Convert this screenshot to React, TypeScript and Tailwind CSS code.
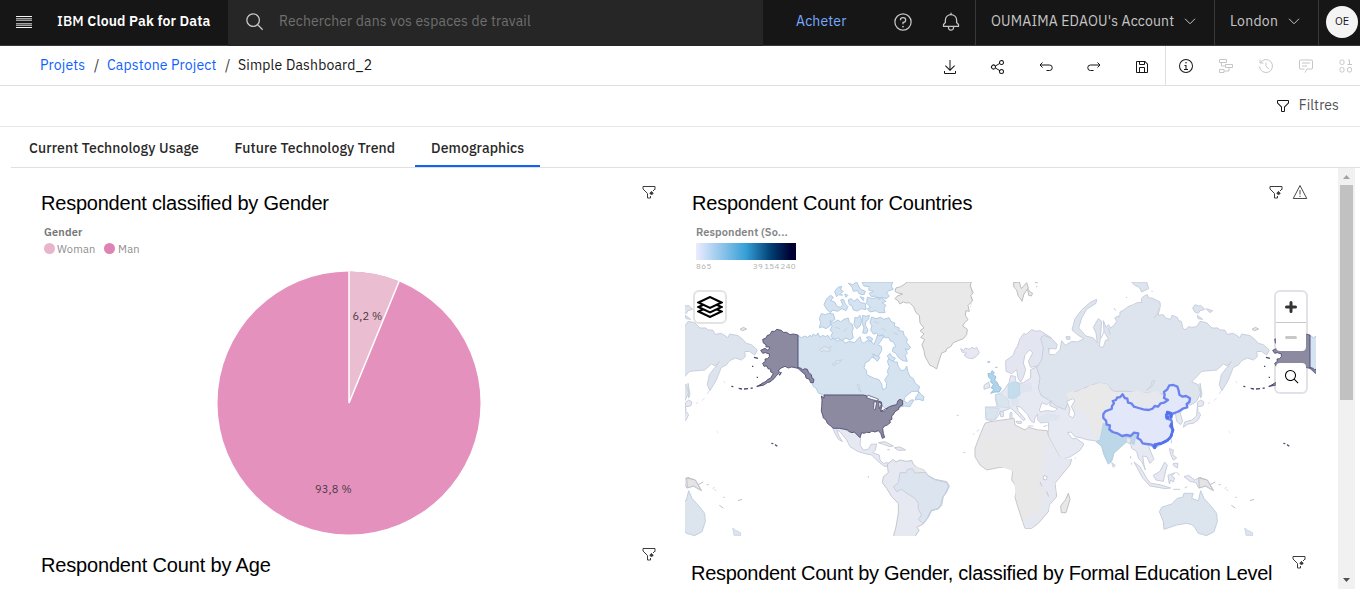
import React from 'react';

type IconProps = { className?: string };

const glyphs = {
  search:
    'M29 27.586l-7.552-7.552a11.018 11.018 0 1 0-1.414 1.414L27.586 29zM4 13a9 9 0 1 1 9 9 9.01 9.01 0 0 1-9-9z',
  bell:
    'M28.707 19.293L26 16.586V13a10.014 10.014 0 0 0-9-9.95V1h-2v2.05A10.014 10.014 0 0 0 6 13v3.586l-2.707 2.707A1 1 0 0 0 3 20v3a1 1 0 0 0 1 1h7v.777a5.152 5.152 0 0 0 4.5 5.199A5.006 5.006 0 0 0 21 25v-1h7a1 1 0 0 0 1-1v-3a1 1 0 0 0-.293-.707zM19 25a3 3 0 0 1-6 0v-1h6zm8-3H5v-1.586l2.707-2.707A1 1 0 0 0 8 17v-4a8 8 0 0 1 16 0v4a1 1 0 0 0 .293.707L27 20.414z',
  download:
    'M26 24v4H6v-4H4v4a2 2 0 0 0 2 2h20a2 2 0 0 0 2-2v-4zM26 14l-1.41-1.41L17 20.17V2h-2v18.17l-7.59-7.58L6 14l10 10 10-10z',
  share:
    'M23 20a5 5 0 0 0-3.89 1.89l-7.31-4.57a4.46 4.46 0 0 0 0-2.64l7.31-4.57A5 5 0 1 0 18 7a4.79 4.79 0 0 0 .2 1.32l-7.31 4.57a5 5 0 1 0 0 6.22l7.31 4.57A4.79 4.79 0 0 0 18 25a5 5 0 1 0 5-5zm0-16a3 3 0 1 1-3 3 3 3 0 0 1 3-3zM7 19a3 3 0 1 1 3-3 3 3 0 0 1-3 3zm16 9a3 3 0 1 1 3-3 3 3 0 0 1-3 3z',
  save:
    'M27.71 9.29l-5-5A1 1 0 0 0 22 4H6a2 2 0 0 0-2 2v20a2 2 0 0 0 2 2h20a2 2 0 0 0 2-2V10a1 1 0 0 0-.29-.71zM12 6h8v4h-8zm8 20h-8v-8h8zm2 0v-8a2 2 0 0 0-2-2h-8a2 2 0 0 0-2 2v8H6V6h4v4a2 2 0 0 0 2 2h8a2 2 0 0 0 2-2V6.41l4 4V26z',
  info:
    'M17 22v-8h-4v2h2v6h-3v2h8v-2h-3zM16 8a1.5 1.5 0 1 0 1.5 1.5A1.5 1.5 0 0 0 16 8zM16 30A14 14 0 1 1 30 16 14 14 0 0 1 16 30zM16 4A12 12 0 1 0 28 16 12 12 0 0 0 16 4z',
  filter:
    'M18 28h-4a2 2 0 0 1-2-2v-7.59L4.59 11A2 2 0 0 1 4 9.59V6a2 2 0 0 1 2-2h20a2 2 0 0 1 2 2v3.59a2 2 0 0 1-.59 1.41L20 18.41V26a2 2 0 0 1-2 2zM6 6v3.59l8 8V26h4v-8.41l8-8V6z',
};

function Glyph({ name, className }: { name: keyof typeof glyphs; className?: string }) {
  return (
    <svg viewBox="0 0 32 32" fill="currentColor" className={className}>
      <path d={glyphs[name]} />
    </svg>
  );
}

function Line({ className, children }: IconProps & { children: React.ReactNode }) {
  return (
    <svg viewBox="0 0 32 32" fill="none" stroke="currentColor" strokeWidth={2} className={className}>
      {children}
    </svg>
  );
}

const Chevron = () => (
  <Line className="size-4 text-[#c6c6c6]">
    <path d="M6 11.500l10 10 10-10" />
  </Line>
);

function WidgetFilter() {
  return (
    <Line className="size-4 text-[#3d3d3d]">
      <path d="M28 11V5H4v5l9 9v9h6v-4" />
      <path d="M28 10l-4 4" />
      <circle cx="21" cy="18.500" r="2.500" fill="currentColor" />
      <path d="M21 14v2M17 18.500h8" strokeWidth={1.500} />
    </Line>
  );
}

function Header() {
  return (
    <header className="flex h-[46px] bg-[#161616] text-[14px] leading-[18px] text-[#c6c6c6]">
      <div className="flex w-[228px] items-center border-b border-[#393939] pb-[3px] pl-4">
        <svg viewBox="0 0 16 12" className="mt-0.5 h-3 w-4" shapeRendering="crispEdges">
          <path d="M0 .5h16M0 11.500h16" stroke="#f4f4f4" />
          <path d="M0 2.500h16M0 4.500h16M0 7.500h16M0 9.500h16" stroke="#a0a0a0" />
          <path d="M0 3.500h16M0 8.500h16" stroke="#5c5c5c" />
        </svg>
        <span className="ml-[25px] whitespace-nowrap text-[14px] tracking-[0.14px] text-white">
          <span className="font-medium">IBM </span>
          <b className="font-semibold">Cloud Pak for Data</b>
        </span>
      </div>
      <div className="flex w-[535px] items-center bg-[#262626] pb-1 pl-[17px]">
        <Glyph name="search" className="mt-px size-5 text-[#c6c6c6]" />
        <span className="ml-[14px] tracking-[0.14px] text-[#6f6f6f]">Rechercher dans vos espaces de travail</span>
      </div>
      <div className="flex flex-1 border-b border-[#393939]">
        <div className="flex w-[213px] items-center border-r border-[#393939] pb-[3px] pl-[33px]">
          <span className="w-[51px] tracking-[0.16px] text-[#78a9ff]">Acheter</span>
          <Line className="ml-[46px] mt-px size-5">
            <circle cx="16" cy="16" r="13" />
            <path d="M12 13v-.5a3.500 3.500 0 0 1 3.500-3.500h1a3.500 3.500 0 0 1 0 7.500H16V19.500" />
            <circle cx="16" cy="23.500" r=".8" fill="currentColor" strokeWidth={1.400} />
          </Line>
          <Glyph name="bell" className="ml-7 mt-px size-5" />
        </div>
        <div className="flex w-[239px] items-center justify-between border-r border-[#393939] pb-[3px] pl-[15px] pr-4">
          <span className="whitespace-nowrap tracking-[0.16px]">OUMAIMA EDAOU's Account</span>
          <Chevron />
        </div>
        <div className="flex w-[104px] items-center justify-between border-r border-[#393939] pb-[3px] pl-[15px] pr-4">
          <span className="tracking-[0.25px]">London</span>
          <Chevron />
        </div>
        <div className="flex flex-1 items-center pb-0.5 pl-[7px]">
          <div className="flex size-8 shrink-0 items-center justify-center rounded-full bg-[#f4f4f4] pb-0.5 text-[11px] text-[#161616]">
            OE
          </div>
        </div>
      </div>
    </header>
  );
}

function Toolbar() {
  return (
    <div className="flex h-10 justify-between border-b border-[#e0e0e0] text-[14px]">
      <nav className="flex items-center pl-10 tracking-[0.16px] text-[#0f62fe]">
        <span className="w-[45px]">Projets</span>
        <span className="w-[22px] pl-[9px] text-[#393939]">/</span>
        <span className="w-[109px] whitespace-nowrap">Capstone Project</span>
        <span className="w-[22px] pl-[9px] text-[#393939]">/</span>
        <span className="text-[#161616]">Simple Dashboard_2</span>
      </nav>
      <div className="flex">
        <div className="flex items-center gap-8 border-r border-[#e0e0e0] pr-[15px] pt-0.5 text-[#161616]">
          <Glyph name="download" className="size-4" />
          <Glyph name="share" className="size-4" />
          <Line className="size-4">
            <path d="M9 7l-5 5 5 5M4 12h19a5.500 5.500 0 0 1 0 11h-6" />
          </Line>
          <Line className="size-4">
            <path d="M23 7l5 5-5 5M28 12H9a5.500 5.500 0 0 0 0 11h6" />
          </Line>
          <Glyph name="save" className="size-4" />
        </div>
        <div className="flex items-center gap-6 pl-3 pr-1.5 text-[#c6c6c6]">
          <Glyph name="info" className="size-4 text-[#161616]" />
          <Line className="size-4">
            <path d="M3 3h14v6H3zM15 13h14v6H15zM3 23h9v6H3zM7 9v7h8M22 19v7H12" />
          </Line>
          <Line className="size-4">
            <path d="M4 3v7h7M4.500 10A13 13 0 1 1 3 17M16 9v8l6 5" />
          </Line>
          <Line className="size-4">
            <path d="M14 29l4-7h9a2 2 0 0 0 2-2V6a2 2 0 0 0-2-2H5a2 2 0 0 0-2 2v14a2 2 0 0 0 2 2h8M8 10h16M8 16h10" />
          </Line>
          <Line className="size-4">
            <rect x="4" y="4" width="8" height="9" rx="3" />
            <rect x="4" y="19" width="8" height="9" rx="3" />
            <rect x="19" y="19" width="8" height="9" rx="3" />
            <path d="M20 4h3v9M19 13h9" />
          </Line>
        </div>
      </div>
    </div>
  );
}

const tabs = [
  { label: 'Current Technology Usage', style: 'w-[205px] pl-[18px]' },
  { label: 'Future Technology Trend', style: 'w-[199px] pl-[18.500px]' },
  { label: 'Demographics', style: 'w-[125px] border-b-[#0f62fe] pl-4' },
];

function Tabs() {
  return (
    <div className="ml-[11px] flex h-[41px] border-b border-[#e0e0e0]">
      {tabs.map((t) => (
        <div
          key={t.label}
          className={`flex items-center whitespace-nowrap border-b-2 border-transparent pt-[5px] text-[14px] font-medium tracking-[0.1px] text-[#282828] ${t.style}`}
        >
          {t.label}
        </div>
      ))}
    </div>
  );
}

function GenderPie() {
  return (
    <svg viewBox="0 0 266 266" className="ml-[176px] size-[266px]" fontFamily='"IBM Plex Sans", Roboto, sans-serif'>
      <circle cx="133" cy="133" r="131.500" fill="#e491be" />
      <path d="M133 133V1.500A131.500 131.500 0 0 1 183.500 11.600Z" fill="#ebbdd1" />
      <path d="M133 1V133L183.200 11" fill="none" stroke="#fff" strokeWidth="1.500" />
      <text x="136.500" y="50" fontSize="11" letterSpacing=".2" fill="#4b3b43">6,2 %</text>
      <text x="99" y="223" fontSize="11" letterSpacing=".2" fill="#4b3b43">93,8 %</text>
    </svg>
  );
}

const edge = '#c9cedd';

function Americas() {
  return (
    <>
      <g transform="translate(810 278) scale(.33333)" fill="#d5e2ef" stroke="#b2cbe4" strokeWidth="3" strokeLinejoin="round">
        <path d="M-36 172L-26 179 -16 174 -8 178 0 172 6 176 10 168 18 174 24 165 30 178 38 172 46 176 54 172 62 184 74 178 80 190 90 184 100 188 106 196 116 190 134 194 142 184 150 176 154 190 162 196 170 188 184 190 192 200 198 184 204 168 212 170 222 176 212 190 204 200 215 206 215 217 205 235 198 244 186 237 176 250 166 254 162 270 170 278 170 290 190 300 207 305 215 318 218 335 228 331 230 316 224 305 235 290 232 280 238 266 232 250 240 236 252 252 262 252 264 264 274 278 284 276 290 264 294 282 300 295 310 302 316 316 329 326 324 340 306 340 296 348 284 358 282 368 292 376 302 366 312 366 304 378 300 386 284 384 250 392 226 392 200 365 180 352 40 351 25 345 18 330 10 325 4 310 -8 298 -15 290 -36 273Z" />
        <path d="M318 356L326 346 324 338 334 350 342 356 340 368 326 364 316 366ZM185 117L198 122 212 118 222 124 237 119 243 130 255 136 252 144 268 150 266 158 280 160 282 172 292 182 290 194 302 208 294 216 286 212 292 226 286 232 292 250 278 248 265 238 258 226 247 220 250 208 258 206 250 192 240 188 236 178 226 180 218 170 206 174 200 166 190 168 182 156 186 144 180 134ZM60 128L70 134 84 126 92 132 102 124 115 120 118 134 126 138 130 150 126 162 130 180 120 186 108 180 95 188 84 180 74 184 62 175 68 164 60 156 66 146ZM34 107L46 110 56 106 70 108 75 124 62 132 60 144 48 152 36 146 28 150 32 134 28 122ZM135 118L142 120 150 112 155 128 150 144 140 152 132 140ZM158 112L168 115 178 112 176 124 168 130 166 142 174 156 170 166 158 165 162 150 156 134Z" />
        <path d="M42 80L50 62 62 52 70 58 62 68 74 72 82 86 92 88 98 80 92 66 100 64 106 78 114 86 108 98 96 92 82 100 68 96 62 104 52 96ZM115 65L124 62 132 70 142 62 152 74 166 76 168 95 154 92 142 99 130 96 126 84 118 80ZM172 58L188 62 200 58 215 60 228 70 216 74 228 82 222 90 225 104 206 104 198 98 180 102 172 92 182 88 170 76ZM156 12H248L244 26 250 34 236 38 230 45 238 54 230 62 215 58 206 64 196 54 184 56 178 46 190 40 176 36 178 26 162 24ZM115 15L128 20 140 12 146 24 152 34 166 40 162 50 148 48 142 38 130 40 126 28ZM74 40L84 28 95 25 92 36 100 40 92 46 98 52 86 50 80 56ZM168 178L178 176 188 182 184 192ZM188 228L198 232 210 238 202 250 192 240ZM232 234L240 226 246 236 256 240 250 250 238 244ZM104 48L114 52 108 58ZM150 56L162 60 160 68Z" />
        <path d="M28 214L38 210 44 204 52 210 64 206 58 214 62 218 48 222 42 216 36 222ZM66 258L76 254 80 246 90 248 96 244 88 254 76 258 72 264ZM142 318L150 324 148 332 154 342 146 336ZM76 148L90 152M100 160L112 150M192 130L206 136M214 150L228 158M250 164L264 170" fill="#dfe6ec" stroke="#bccbda" strokeWidth="2" />
        <path
          d="M255 40L258 30 272 26 285 18 290 12H484L480 24 490 45 482 52 488 68 474 82 478 100 468 98 466 112 474 125 464 134 458 144 472 154 470 170 460 182 444 188 430 194 422 206 410 212 408 220 395 225 390 240 385 255 380 273 370 266 360 262 352 248 345 235 342 218 336 200 344 184 332 178 342 168 330 158 342 150 330 135 328 112 318 104 310 85 298 74 290 75 280 72 270 78 264 68 255 62 262 54 278 48 262 44Z"
          fill="#e9e9e9"
          stroke="#bdbdbd"
        />
        <path d="M482 20l4 26M486 60l-4 26" fill="none" stroke="#c4c4c4" strokeDasharray="4 4" />
        <path d="M452 212L462 218 466 210 478 214 486 208 494 212 500 208 508 224 500 234 488 242 474 240 462 232 470 226 456 222Z" fill="#e7e8f3" stroke={edge} />
      </g>
      <g transform="translate(680 278) scale(.33333)" fill="#8b8aa1" stroke="#49466f" strokeWidth="2.500">
        <path d="M354 171L340 168 330 170 320 163 310 163 304 157 290 154 284 160 275 160 270 170 262 172 258 180 248 184 250 195 258 200 258 207 268 207 268 213 262 216 255 211 242 217 248 226 256 224 268 228 268 236 262 242 255 243 256 250 248 256 252 265 260 264 264 272 272 274 272 282 280 286 272 300 264 304 255 312 246 316 236 324 250 322 262 314 270 312 282 302 290 292 298 285 296 276 304 270 315 265 325 270 335 267 354 271ZM354 269L362 270 368 276 374 272 382 274 386 284 394 290 396 300 402 304 400 314 392 314 388 304 378 300 376 290 370 285Z" />
        <path d="M298 292L304 282M222 238L234 241M216 265h4M230 298h4M154 325l6 1M176 331l10 2M192 333l12-1M212 331l6-1M230 326l14-6" strokeWidth="4" />
        <path d="M180 154L190 148 200 153 188 158Z" fill="#e7e7e7" stroke="#bbb" />
        <path d="M130 310l6 5M110 460l5 4" stroke="#cfdcf0" />
      </g>
      <g transform="translate(800 380) scale(.33333)" fill="#e6e8f2" stroke={edge} strokeWidth="3">
        <path d="M97 142L118 145 135 148 148 155 163 156 172 165 182 174 180 195 190 210 205 208 213 193 230 192 226 210 218 218 238 225 240 240 250 250 265 248 268 256 255 260 235 245 215 225 200 222 175 215 150 200 140 180 120 155 110 150 118 170 128 185 115 178 105 160Z" />
        <path d="M235 188L255 185 280 198 270 200 250 193ZM283 203L300 201 317 210 295 211ZM262 209h8M205 288v5M332 242h5M470 106h6M490 218h6" stroke="#c9cad4" />
        <path d="M265 250L280 238 288 246 300 240 318 244 335 242 340 252 350 262 372 270 382 285 405 298 440 305 448 318 438 340 430 350 425 375 415 387 395 392 385 412 370 432 350 442 358 450 345 470H280L288 440 295 400 295 370 275 350 260 325 247 308 250 290 265 278 262 255Z" stroke="#c5c7cd" />
        <path d="M350 262L372 270 379 279 342 279 338 268Z" fill="#e9e8e8" stroke="none" />
        <path d="M300 278L318 278 322 268 338 266 344 279 378 277 384 287 405 299 439 307 446 318 436 340 428 350 423 375 413 386 393 391 383 412 370 431 355 418 365 405 355 388 355 370 345 355 320 340 305 328 290 335 280 320 295 308Z" fill="#dbe4ef" />
        <path d="M384 287L405 299 439 307 446 318 436 340 428 350 423 375 413 386 393 391 383 412 370 431" fill="none" stroke="#bcd0e2" strokeWidth="2" />
        <path d="M72 45L190 45 200 48 212 52 222 58 232 62 244 66 246 78 242 92 250 92 268 80 280 76 290 74 294 62 300 58 308 62 308 75 298 80 296 88 285 95 280 104 275 108 276 118 268 122 272 127 262 135 254 138 248 145 250 160 254 172 247 175 242 160 235 152 225 156 215 153 210 158 200 157 192 160 185 158 180 173 172 165 163 156 156 158 148 155 142 150 135 148 118 145 100 145 92 138 82 130 78 120 70 114 68 105 64 94 65 80 66 60 64 48 72 54Z" fill="#8b8aa1" stroke="#49466f" strokeWidth="2.500" />
        <path d="M198 52L206 46 214 50 222 52 236 58 230 62 214 58ZM222 66L230 66 228 76 226 90 221 86ZM236 66L244 72 238 86ZM242 94L250 90 262 84 256 92Z" fill="#fff" stroke="#49466f" strokeWidth="2" />
      </g>
    </>
  );
}

function OldWorld() {
  return (
    <g transform="translate(960 278) scale(.33333)" fill="#e6e8f2" stroke={edge} strokeWidth="3" strokeLinejoin="round">
      <path d="M240 158L228 160 215 155 198 170 192 166 180 182 172 205 164 218 160 232 137 248 138 280 155 287 170 275 174 300 182 312 190 298 197 275 190 255 195 230 210 215 218 225 205 250 212 268 240 262 262 240 275 180Z" fill="#e3e6f1" />
      <path d="M235 265L212 275 212 300 190 314 178 316 166 310 166 295 152 293 148 312 135 332 120 347 106 350 106 362 112 387 76 387 78 425 92 427 107 424 118 408 120 402 140 396 152 390 165 402 190 428 196 424 174 398 170 384 182 388 202 408 212 428 222 435 225 420 233 408 233 426 242 435 265 432 266 455 262 470 270 490 288 518 302 545 330 537 360 517 372 498 350 482 336 482 323 464 333 462 345 476 365 480 380 485 405 488 425 505 432 530 445 558 455 550 462 525 485 505 500 492 510 490 515 511 530 520 535 540 546 552 556 576 552 560 548 534 560 536 570 556 582 544 570 516 565 501 585 511 620 491 638 461 630 426 635 406 646 405 650 430 662 440 668 430 660 404 690 376 640 330H250Z" />
      <path d="M252 172L275 182 292 200 288 213 265 211 268 230 285 230 300 215 305 188 316 202 335 190 352 192 372 182 355 172 336 156 345 122 365 96 392 72 410 64 408 76 380 94 365 120 356 150 378 174 400 180 412 195 408 165 400 148 415 122 425 130 421 180 418 206 430 208 437 186 447 186 432 160 430 128 438 148 445 140 452 150 462 142 470 130 464 120 480 112 480 102 492 96 504 86 520 80 532 74 545 73 544 62 553 54 562 50 566 60 576 60 588 66 600 72 601 86 594 98 596 112 610 110 616 120 632 124 636 112 652 118 656 128 664 130 668 148 675 156 686 146 695 148 710 146 720 130 740 134 756 150 774 150 780 156 794 156 802 169 820 166 840 179 845 168 870 173 884 184 895 196 910 200 928 216 920 231 904 220 890 221 892 236 880 246 862 240 845 248 834 262 820 268 805 306 786 338 778 320 784 290 806 262 814 250 802 264 790 258 770 276 725 280 695 312 715 320 722 345 710 370 690 382 640 350 560 345 500 340 460 340 440 318 415 315 380 327 350 340 325 347 325 372 315 395 290 385 266 366 243 352 235 330 240 300 230 270 245 245 250 210 242 180Z" fill="#dde4ee" />
      <path d="M582 120L596 104 600 92M424 180l8-20M445 150l6 20" fill="none" />
      <path d="M319 348L334 340 350 342 366 332 380 330 390 322 404 322 415 314 440 318 456 340 486 346 480 366 456 386 432 410 450 430 430 470 404 480 376 400 348 400 340 372 326 370Z" fill="#e9e9e9" stroke="none" />
      <path d="M486 348L530 338 562 346 590 338 616 360 590 382 550 390 505 368Z" fill="#e6e8ed" stroke="none" />
      <path d="M320 370L338 362 345 368 334 385 345 408 338 420 326 412 330 394ZM238 396L246 374 260 380 275 368 268 382 292 392 284 400 258 398 242 402Z" fill="#fff" />
      <path d="M560 336L578 324 584 306 576 310 572 324Z" fill="#e1e5eb" stroke="#c5cad3" strokeWidth="2" />
      <path d="M106 352L122 346 145 366 148 390 114 386ZM76 388L118 392 104 424 80 425Z" fill="#d9e4ef" stroke="#c7d9e9" strokeWidth="2" />
      <path d="M145 320L158 312 180 316 180 350 164 362 145 360Z" fill="#c4dceb" stroke="#b5d5e9" strokeWidth="2" />
      <path d="M180 320L214 312 218 338 184 346ZM232 418L262 404 300 412 296 428 240 432ZM152 364L176 360 176 380 154 386Z" fill="#dfe5ef" stroke="none" />
      <path d="M84 286L92 288 96 278 103 284 98 290 108 296 104 306 112 314 116 324 124 330 118 342 104 342 92 346 102 334 94 330 100 320 92 312 94 304 86 298Z" fill="#b3d4e8" stroke="#8fc3e2" strokeWidth="3" />
      <path d="M72 322L86 312 90 328 72 334ZM120 400h10v16h-8ZM150 404h6v20h-6ZM168 430h16v6h-12ZM204 444h16M250 446l12-4" />
      <path d="M106 268h6M82 252h8" stroke="#a6bfd2" strokeWidth="4" />
      <path d="M160 14L178 12 184 32 200 14 205 30 192 48 186 70 180 60 175 55 170 36 162 28ZM203 32L210 42 218 46 214 54 206 52ZM225 14h8M228 26h4" fill="#e9e9e9" stroke="#bdbdbd" />
      <path d="M515 12H560L566 32 545 42 538 28 524 22ZM698 90L705 80 716 84 722 82 734 94 720 98 715 106 704 102ZM738 92L758 98 750 104ZM712 112L728 124 714 122ZM318 176h12v8h-10ZM462 90l5 8M498 58h4M470 116h8M574 40h4" fill="#dde4ee" />

      <path d="M75 436L90 431 120 427 162 421 165 441 195 456 205 448 235 456 262 458 266 476 282 506 300 538 306 548 335 544 330 561 305 591 285 616 290 656 268 681 265 701 235 736 215 751 195 751 188 731 170 676 165 656 172 631 155 606 158 578 144 568 120 568 80 576 60 561 45 536 45 511 60 471Z" fill="#e8e8ec" stroke="#c8c8cc" />
      <path d="M264 474L300 538 334 545 304 590 284 616 288 655 268 680 264 700 215 750 196 750 190 730 214 716 240 706 250 680 246 660 262 640 232 610 248 590 252 560 268 540 254 520 262 496Z" fill="#e6e8f1" stroke="none" />
      <path d="M48 512L80 480 120 468 150 484 200 474 244 484 250 530 238 550 242 576 226 600 240 640 250 660 232 686 210 712 190 722 168 660 158 578 120 566 76 570Z" fill="#e8e8e8" stroke="none" />
      <path d="M252 592L262 596 258 606 250 604ZM240 612l6 14M260 640l6 16" fill="#fff" stroke="#c5c8d2" />
      <path d="M325 646L330 664 318 704 304 704 302 684 316 666Z" fill="#e8e8e8" stroke="#c0c0c0" />
      <path d="M38 468h5M50 460l8-5M344 540h4" stroke="#cddbea" />

      <path d="M430 436L446 442 452 462 500 472 528 470 522 500 506 488 494 494 462 526 454 550 445 558 432 530 425 506 408 490 420 486Z" fill="#bcd7e8" stroke="#a9cfe5" strokeWidth="2" />
      <path d="M498 478L514 482 510 498 500 492Z" fill="#e6e8f2" />
      <path d="M455 554L466 562 460 568ZM512 534v8M514 554v6" />
      <path d="M430 408L436 400 446 396 455 393 456 384 462 376 458 369 468 366 472 358 480 358 488 349 494 360 502 362 504 374 514 376 522 386 536 390 550 394 566 396 578 392 584 384 594 386 602 376 612 374 624 366 612 360 614 350 612 342 622 334 628 322 640 321 652 326 656 338 658 350 668 356 678 354 690 361 688 372 680 378 682 388 668 392 660 398 652 402 640 406 632 414 626 408 618 410 620 422 634 426 636 434 630 444 640 456 634 470 630 481 618 488 605 496 592 498 584 510 576 500 560 498 548 496 542 486 532 480 535 466 522 464 512 474 500 471 486 474 472 466 458 462 448 454 450 442 440 440 438 428 430 420Z" fill="#e2e8fa" stroke="#6b83ef" strokeWidth="7" />
      <path d="M622 402L634 406 634 418 620 418ZM634 436L638 456 634 474 622 488 604 496 584 500 584 512" fill="none" stroke="#4f70ef" strokeWidth="8" strokeDasharray="14 1" />

      <path d="M670 448L674 432 696 426 710 414 712 386 728 384 732 372 722 366 712 374 714 400 722 410 714 426 700 436 684 438ZM720 316L726 350 722 360ZM634 484v12M628 512L640 516 638 530 650 540 640 546 632 530ZM640 556L654 556 652 570 640 562ZM522 552L540 566 562 604 572 616 600 620 632 630 616 632 570 624 548 600ZM580 592L600 580 614 552 622 562 616 582 610 610 588 606ZM624 592L646 584 634 594 644 600 640 612 632 606 628 618ZM640 634h20M674 630L682 626M650 582l8 10M672 596L686 592 704 606 720 598 742 606 760 636 736 624 716 630 708 614 690 610Z" />
      <path d="M716 600L742 606 760 638 736 624 718 630ZM750 620l16-8M776 620h6M800 634l4 4M826 658h4M814 682l12 8M798 628l-3 4M870 668l12-4" fill="#e4e4e6" stroke="#bfc0c4" />
      <path d="M668 658L672 646 700 646 695 661 715 668 722 638 732 661 750 681 770 706 772 731 762 761 740 773 715 766 704 748 696 740 680 736 650 741 612 754 610 731 598 701 605 688 635 678 652 661Z" fill="#dce4ee" stroke="#c2cfde" />
      <path d="M854 750L862 756 878 764 878 774 858 772Z" fill="#dbe3ee" stroke="#c6cfdb" strokeWidth="2" />
      <path d="M722 768h8M784 338l-6 10M770 360l-8 8M750 372l-6 6" stroke="#d8dff0" />
      <path d="M970 496l6 1M981 500l7 5" stroke="#55527a" strokeWidth="4" />
    </g>
  );
}

function WorldMap() {
  return (
    <div className="relative h-[254px] w-[631px]">
      <svg viewBox="685 282 631 254" className="h-[254px] w-[631px]">
        <OldWorld />
        <g transform="translate(-512 0)">
          <OldWorld />
        </g>
        <Americas />
        <g transform="translate(512 0)">
          <Americas />
        </g>
      </svg>
      <button className="absolute left-2 top-2 flex size-[34px] items-center justify-center rounded-md border-2 border-[#e3e3e3] bg-white">
        <svg viewBox="0 0 26 22" className="h-[22px] w-[26px] shrink-0" fill="#fff" stroke="#000" strokeWidth="2">
          <path d="M1.500 15.500L13 10l11.500 5.500L13 21Z" />
          <path d="M1.500 11L13 5.500 24.500 11 13 16.500Z" />
          <path d="M1.500 6.500L13 1l11.500 5.500L13 12Z" />
        </svg>
      </button>
      <div className="absolute left-[589px] top-2 flex w-[34px] flex-col gap-2">
        <div className="h-[63px] rounded-md border-2 border-[#8886a0]/25 bg-white bg-clip-padding">
          <div className="flex h-[31px] items-center justify-center border-b border-[#c8c8c8]">
            <svg viewBox="0 0 12 12" className="size-3" stroke="#333" strokeWidth="3" strokeLinecap="round">
              <path d="M6 1.500v9M1.500 6h9" />
            </svg>
          </div>
          <div className="flex h-7 items-center justify-center">
            <div className="h-[3px] w-3 rounded bg-[#c8c8c8]" />
          </div>
        </div>
        <div className="flex h-[33px] items-center justify-center rounded-md border-2 border-[#8886a0]/25 bg-white bg-clip-padding pb-px pl-px">
          <Glyph name="search" className="size-4 text-black" />
        </div>
      </div>
    </div>
  );
}

const titleStyle =
  'whitespace-nowrap font-["Liberation_Sans",Arial,sans-serif] text-[20px] leading-6 text-black';

function Dashboard() {
  return (
    <main className="flex h-[421px] w-[1338px] overflow-hidden">
      <section className="flex w-[685px] flex-col">
        <div className="flex h-[57px] items-start justify-between pl-[41px] pr-7">
          <h2 className={`${titleStyle} mt-[23px] tracking-[-0.22px]`}>Respondent classified by Gender</h2>
          <div className="mt-4">
            <WidgetFilter />
          </div>
        </div>
        <div className="h-[45px] pl-11 text-[11px] leading-[14px] text-[#8d8d8d]">
          <div className="font-semibold tracking-[0.15px] text-[#767676]">Gender</div>
          <div className="mt-[3px] flex items-center tracking-[0.2px]">
            <i className="mb-0.5 mr-0.5 size-[11px] rounded-full bg-[#e8b5cc]" />
            <span className="w-[47px]">Woman</span>
            <i className="mb-0.5 mr-[3px] size-[11px] rounded-full bg-[#df82b4]" />
            Man
          </div>
        </div>
        <div className="ml-10 h-[266px] shrink-0">
          <GenderPie />
        </div>
        <div className="flex h-[53px] shrink-0 items-start justify-between pl-[41px] pr-7">
          <h2 className={`${titleStyle} mt-[17px] tracking-[-0.17px]`}>Respondent Count by Age</h2>
          <div className="mt-2.5">
            <WidgetFilter />
          </div>
        </div>
      </section>
      <section className="flex w-[653px] flex-col">
        <div className="flex h-[57px] items-start justify-between pl-[7px] pr-[30px]">
          <h2 className={`${titleStyle} mt-[23px] tracking-[-0.22px]`}>Respondent Count for Countries</h2>
          <div className="mt-4 flex gap-2">
            <WidgetFilter />
            <Line className="size-4 text-[#4a4a4a]">
              <path d="M16 3L29.500 29h-27ZM16 12v9M16 23.500v2.500" />
            </Line>
          </div>
        </div>
        <div className="h-[57px] pl-[11px]">
          <div className="text-[11px] font-semibold leading-[14px] tracking-[0.1px] text-[#858585]">Respondent (So...</div>
          <div className="mt-1 h-[17px] w-[100px] bg-[linear-gradient(90deg,#ececff_0%,#9dcbed_22%,#359fd6_50%,#003f73_75%,#000032_95%)]" />
          <div className="mt-px flex w-[100px] justify-between text-[8px] leading-[11px] tracking-[0.4px] text-[#b0b0b0]">
            <span>865</span>
            <span className="tracking-[0.35px] [word-spacing:-1.3px]">39 154 240</span>
          </div>
        </div>
        <WorldMap />
        <div className="flex h-[53px] items-start justify-between pl-1.5 pr-[31px]">
          <h2 className={`${titleStyle} mt-[25px] tracking-[-0.3px]`}>
            Respondent Count by Gender, classified by Formal Education Level
          </h2>
          <div className="mt-[18px]">
            <WidgetFilter />
          </div>
        </div>
      </section>
    </main>
  );
}

function Scrollbar() {
  return (
    <div className="flex h-[421px] w-[17px] flex-col items-center bg-[#f1f1f1]">
      <svg viewBox="0 0 17 17" className="size-[17px]">
        <path d="M5 11l3.500-4 3.500 4z" fill="#a3a3a3" />
      </svg>
      <div className="h-[215px] w-[13px] bg-[#c1c1c1]" />
      <svg viewBox="0 0 17 17" className="mt-auto size-[17px]">
        <path d="M5 6l3.500 4L12 6z" fill="#505050" />
      </svg>
    </div>
  );
}

export default function App() {
  return (
    <div className='h-[594px] w-[1360px] overflow-hidden bg-white font-["IBM_Plex_Sans",Roboto,"Open_Sans",sans-serif]'>
      <Header />
      <Toolbar />
      <div className="flex h-[41px] items-center justify-end border-b border-[#e8e8e8] pb-0.5 pr-[21px] text-[14px] tracking-[0.1px] text-[#525252]">
        <Glyph name="filter" className="mr-2 mt-0.5 size-4 text-[#161616]" />
        Filtres
      </div>
      <Tabs />
      <div className="flex">
        <Dashboard />
        <Scrollbar />
      </div>
    </div>
  );
}
